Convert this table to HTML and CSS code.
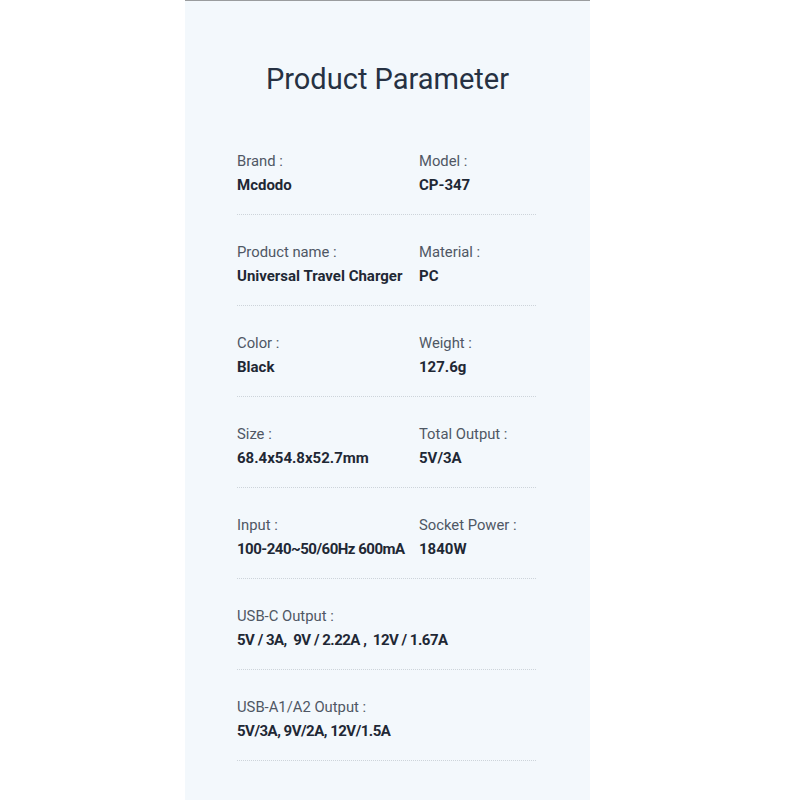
FILE: index.html
```html
<!DOCTYPE html>
<html lang="en">
<head>
<meta charset="utf-8">
<title>Product Parameter</title>
<link rel="stylesheet" href="styles.css">
</head>
<body>
<main class="panel">
  <h1 class="title">Product Parameter</h1>
  <section class="row">
    <div class="cell"><div class="label">Brand :</div><div class="value">Mcdodo</div></div>
    <div class="cell"><div class="label">Model :</div><div class="value">CP-347</div></div>
  </section>
  <section class="row">
    <div class="cell"><div class="label">Product name :</div><div class="value">Universal Travel Charger</div></div>
    <div class="cell"><div class="label">Material :</div><div class="value">PC</div></div>
  </section>
  <section class="row">
    <div class="cell"><div class="label">Color :</div><div class="value">Black</div></div>
    <div class="cell"><div class="label">Weight :</div><div class="value">127.6g</div></div>
  </section>
  <section class="row">
    <div class="cell"><div class="label">Size :</div><div class="value">68.4x54.8x52.7mm</div></div>
    <div class="cell"><div class="label">Total Output :</div><div class="value">5V/3A</div></div>
  </section>
  <section class="row">
    <div class="cell"><div class="label">Input :</div><div class="value tight">100-240~50/60Hz 600mA</div></div>
    <div class="cell"><div class="label">Socket Power :</div><div class="value">1840W</div></div>
  </section>
  <section class="row single">
    <div class="cell"><div class="label">USB-C Output :</div><div class="value tight">5V / 3A,&nbsp; 9V / 2.22A ,&nbsp; 12V / 1.67A</div></div>
  </section>
  <section class="row single">
    <div class="cell"><div class="label">USB-A1/A2 Output :</div><div class="value tight">5V/3A, 9V/2A, 12V/1.5A</div></div>
  </section>
</main>
</body>
</html>
```
FILE: styles.css
```css
html, body {
  margin: 0;
  padding: 0;
  background: #ffffff;
}
body {
  font-family: Roboto, "Liberation Sans", sans-serif;
}
.panel {
  box-sizing: border-box;
  width: 405px;
  height: 800px;
  margin-left: 185px;
  padding: 58px 54px 0 52px;
  background: #f3f8fc;
  border-top: 1px solid #9a9c9e;
}
.title {
  margin: 0 0 25px;
  font-size: 29px;
  line-height: 40px;
  font-weight: 400;
  color: #263142;
  text-align: center;
  padding-left: 2px;
}
.row {
  display: grid;
  grid-template-columns: 182px 1fr;
  padding: 26px 0 17px;
  border-bottom: 1px dotted #cdd4da;
}
.row.single {
  grid-template-columns: 1fr;
}
.cell {
  display: flex;
  flex-direction: column;
  gap: 1px;
  white-space: nowrap;
}
.label {
  font-size: 14.8px;
  line-height: 22px;
  color: #4f5764;
}
.value {
  font-size: 15px;
  line-height: 24px;
  font-weight: 700;
  color: #1f2835;
}
.value.tight {
  letter-spacing: -0.5px;
}
```
